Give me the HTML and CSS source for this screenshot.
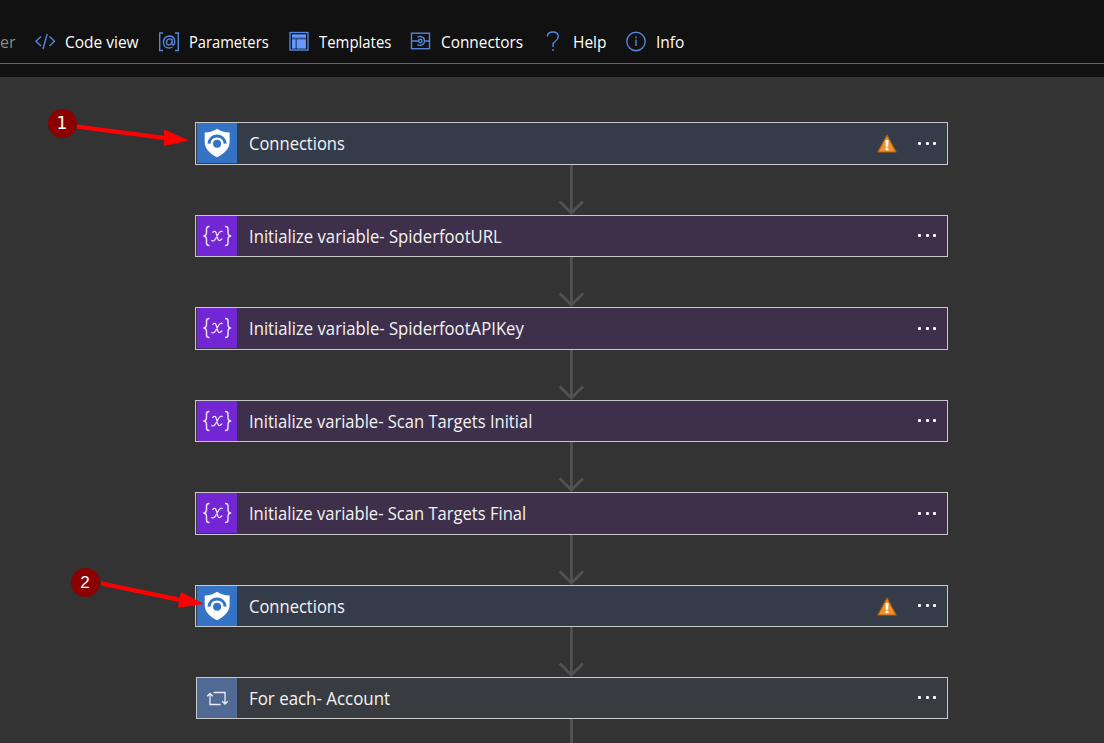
FILE: index.html
```
<!DOCTYPE html>
<html lang="en">
<head>
<meta charset="utf-8">
<title>Logic app designer</title>
<link rel="stylesheet" href="styles.css">
</head>
<body>
<svg class="defs" width="0" height="0" aria-hidden="true">
  <symbol id="shield" viewBox="0 0 40 40">
    <path fill="#fff" d="M20 5.800C17 8.300 12.500 9.300 7.700 9.600V19C7.700 26 13.300 31 20 34.300C26.700 31 32.600 26 32.600 19V9.600C28 9.300 23 8.300 20 5.800Z"/>
    <path fill="none" stroke="#3573c4" stroke-width="3" d="M12 20.600C13 10.300 27 10.300 28.200 20.600"/>
    <circle cx="20.100" cy="20.800" r="4" fill="#3573c4"/>
  </symbol>
  <symbol id="loop" viewBox="0 0 40 40">
    <path fill="none" stroke="#e8edf5" stroke-width="1.300" d="M23.500 26.500H13V15.500M10.200 18.300L13 15.500L15.800 18.300M16.500 14.500H28V26M25.200 23.200L28 26L30.800 23.200"/>
  </symbol>
  <symbol id="variable" viewBox="0 0 40 40">
    <path fill="none" stroke="#eadcff" stroke-width="1.500" d="M12.500 10.500H12Q9.500 10.500 9.500 13V16.500Q9.500 20 6.300 20Q9.500 20 9.500 23.500V27Q9.500 29.500 12 29.500H12.500M28 10.500H28.500Q31 10.500 31 13V16.500Q31 20 34.200 20Q31 20 31 23.500V27Q31 29.500 28.500 29.500H28"/>
    <path fill="none" stroke="#eadcff" stroke-width="1.300" stroke-linecap="round" d="M15.800 16.300Q18.300 14 19.300 17.500L20.700 22.500Q21.700 26.300 24.800 23M25.300 15.500Q23.500 14.300 21.300 18L18.800 22.300Q16.500 26 14.800 24.500"/>
  </symbol>
  <symbol id="warn" viewBox="0 0 20 19">
    <path d="M10 1.200L19 18H1Z" fill="#f4902a" stroke="#b86512" stroke-width="1.200" stroke-linejoin="round"/>
    <path fill="#fff" d="M8.500 6H11.500L11.200 12.700H8.800ZM8.600 13.700H11.400V16.200H8.600Z"/>
  </symbol>
  <symbol id="down" viewBox="0 0 28 50">
    <path fill="none" stroke="#525252" stroke-width="2.700" d="M14.400 0V47M2.700 36.500L14.400 48L26 36.500"/>
  </symbol>
</svg>

<header class="toolbar">
  <span class="item tail">er</span>
  <span class="item code"><svg width="22" height="20" viewBox="0 0 22 20"><path d="M7 5.500L2 10.300L7 15M15.500 5.500L20.500 10.300L15.500 15M13.200 3L9 18"/></svg><span class="label">Code view</span></span>
  <span class="item params"><svg width="22" height="20" viewBox="0 0 22 20"><path d="M5 2H1.700V19.500H5M17 2H20.300V19.500H17"/><path d="M14 7.500V12.500Q14 14.500 15.500 14Q17 13 16.600 9.500Q16 5 11.300 5Q5.500 5.500 5.500 11.500Q5.800 17 11 17Q13 17 14.500 16M14 9.500Q13.500 7.800 11.600 7.900Q8.500 8.200 8.500 11.500Q8.700 14 10.700 14Q13.500 13.700 14 10.500"/></svg><span class="label">Parameters</span></span>
  <span class="item templates"><svg width="20" height="20" viewBox="0 0 20 20"><rect x="1" y="1.500" width="18" height="17.500"/><path class="dim" d="M3 3.500H17V17.500H3Z"/><path class="solid" d="M3 3.500H17V6.500H3ZM3 8.500H6.500V17.500H3ZM8 8.500H17V17.500H8Z"/></svg><span class="label">Templates</span></span>
  <span class="item connectors"><svg width="20" height="20" viewBox="0 0 20 20"><rect x="1.500" y="2.200" width="18" height="15.500"/><path d="M1.500 10H9M14.500 10H19.500M7.500 6.300Q9 5 10.800 5.500Q14.500 6.300 14.500 10Q14.500 13.500 10.800 14.200Q9 14.700 7.500 13.500"/><circle cx="10.300" cy="10" r="1.700"/></svg><span class="label">Connectors</span></span>
  <span class="item help"><svg width="14" height="22" viewBox="0 0 14 22"><path d="M1.300 6.500Q1.500 2 6.800 2Q12.300 2 12.300 6.500Q12.300 9 9.500 11Q7 12.800 7 15V17M7 19V21"/></svg><span class="label">Help</span></span>
  <span class="item info"><svg width="20" height="20" viewBox="0 0 20 20"><circle cx="10" cy="10.500" r="9.200"/><path d="M10 8.500V15M10 5.500V7.200"/></svg><span class="label">Info</span></span>
</header>

<main class="canvas">
  <section class="card blue"><svg class="icon"><use href="#shield"/></svg><span class="title conn">Connections</span><svg class="warn"><use href="#warn"/></svg><span class="dots"><i></i><i></i><i></i></span></section>
  <svg class="down"><use href="#down"/></svg>
  <section class="card purple short"><svg class="icon"><use href="#variable"/></svg><span class="title">Initialize variable- SpiderfootURL</span><span class="dots"><i></i><i></i><i></i></span></section>
  <svg class="down"><use href="#down"/></svg>
  <section class="card purple"><svg class="icon"><use href="#variable"/></svg><span class="title">Initialize variable- SpiderfootAPIKey</span><span class="dots"><i></i><i></i><i></i></span></section>
  <svg class="down"><use href="#down"/></svg>
  <section class="card purple short"><svg class="icon"><use href="#variable"/></svg><span class="title scan">Initialize variable- Scan Targets Initial</span><span class="dots"><i></i><i></i><i></i></span></section>
  <svg class="down"><use href="#down"/></svg>
  <section class="card purple"><svg class="icon"><use href="#variable"/></svg><span class="title scan">Initialize variable- Scan Targets Final</span><span class="dots"><i></i><i></i><i></i></span></section>
  <svg class="down"><use href="#down"/></svg>
  <section class="card blue short"><svg class="icon"><use href="#shield"/></svg><span class="title conn">Connections</span><svg class="warn"><use href="#warn"/></svg><span class="dots"><i></i><i></i><i></i></span></section>
  <svg class="down"><use href="#down"/></svg>
  <section class="card slate short"><svg class="icon"><use href="#loop"/></svg><span class="title each">For each- Account</span><span class="dots"><i></i><i></i><i></i></span></section>
  <div class="stem"></div>
</main>

<div class="callout first"><span class="badge">1</span><svg class="arrow" width="112" height="36" viewBox="0 0 112 36"><path d="M0 15.500L87 26.800V20.500L112 31.500L87 37V31L0 19.800Z"/></svg></div>
<div class="callout second"><span class="badge">2</span><svg class="arrow" width="103" height="36" viewBox="0 0 103 36"><path d="M1 13.200L79.500 29.500L81 24L104 36L78 39.700L79 34L1 17.500Z"/></svg></div>
</body>
</html>
```
FILE: styles.css
```
* { box-sizing: border-box; }
body {
  margin: 0;
  width: 1104px;
  height: 743px;
  overflow: hidden;
  position: relative;
  background: #333;
  color: #fff;
  font-family: "Open Sans", "Noto Sans", sans-serif;
}
svg { display: block; flex: none; }
.defs { display: none; }

.toolbar {
  height: 64px;
  padding-top: 20px;
  display: flex;
  align-items: center;
  background: #111;
  border-bottom: 1px solid #666;
  font-size: 16px;
}
.toolbar .item { display: flex; align-items: center; white-space: nowrap; height: 43px; }
.toolbar svg { fill: none; stroke: #5585dc; stroke-width: 1.4; overflow: visible; margin-top: -2px; }
.toolbar svg .solid { fill: #6699ff; stroke: none; }
.toolbar svg .dim { fill: #35548f; stroke: none; }
.label { transform: scaleX(0.968); transform-origin: left; }
.params .label { transform: scaleX(0.92); }
.templates .label { transform: scaleX(0.932); }
.connectors .label { transform: scaleX(0.96); }
.tail { width: 34px; color: #8a8a8a; }
.code { width: 124px; gap: 9px; }
.params { width: 131px; gap: 9px; }
.templates { width: 121px; gap: 10px; }
.connectors { width: 136px; gap: 11px; }
.help { width: 80px; gap: 13px; }
.info { gap: 10px; }

.canvas {
  border-top: 13px solid #111;
  padding: 45px 0 0 195px;
  display: flex;
  flex-direction: column;
  align-items: flex-start;
}
.card {
  width: 753px;
  height: 43px;
  flex: none;
  display: flex;
  align-items: center;
  border: 1px solid #c8c8c8;
  padding: 0 11px 0 1px;
}
.card.short { height: 42px; }
.card .icon { width: 40px; height: 40px; align-self: flex-start; }
.blue { background: #353c49; }
.blue .icon { background: #3573c4; }
.purple { background: #3e304a; }
.purple .icon { background: #7226d4; }
.slate { background: #383b40; margin-left: 1px; width: 752px; padding-left: 0; }
.slate .icon { background: #506a94; }
.title {
  flex: 1;
  margin-left: 12px;
  padding-bottom: 2px;
  font-size: 17.5px;
  line-height: 24px;
  white-space: nowrap;
  color: #f3f3f3;
  transform: scaleX(0.954);
  transform-origin: left;
}
.title.scan { transform: scaleX(0.946); }
.title.conn { transform: scaleX(0.945); }
.title.each { transform: scaleX(0.965); }
.short .title { padding-bottom: 1px; }
.warn { width: 20px; height: 19px; margin-right: 21px; }
.dots { display: flex; gap: 4.5px; margin-top: -1px; }
.dots i { width: 3px; height: 3px; border-radius: 1px; background: #fff; }
.down { width: 28px; height: 50px; margin-left: 362px; flex: none; }
.stem { width: 3px; height: 24px; margin-left: 375px; background: #525252; flex: none; }

.callout { position: absolute; display: flex; }
.first { left: 48px; top: 109px; }
.second { left: 71px; top: 568px; }
.badge {
  width: 29px;
  height: 29px;
  padding-right: 1px;
  border-radius: 50%;
  background: #8b0000;
  font: 17px/29px "DejaVu Sans", sans-serif;
  text-align: center;
}
.second .badge { font-family: "Liberation Sans", Arial, sans-serif; }
.arrow { fill: #f00; overflow: visible; }
```
